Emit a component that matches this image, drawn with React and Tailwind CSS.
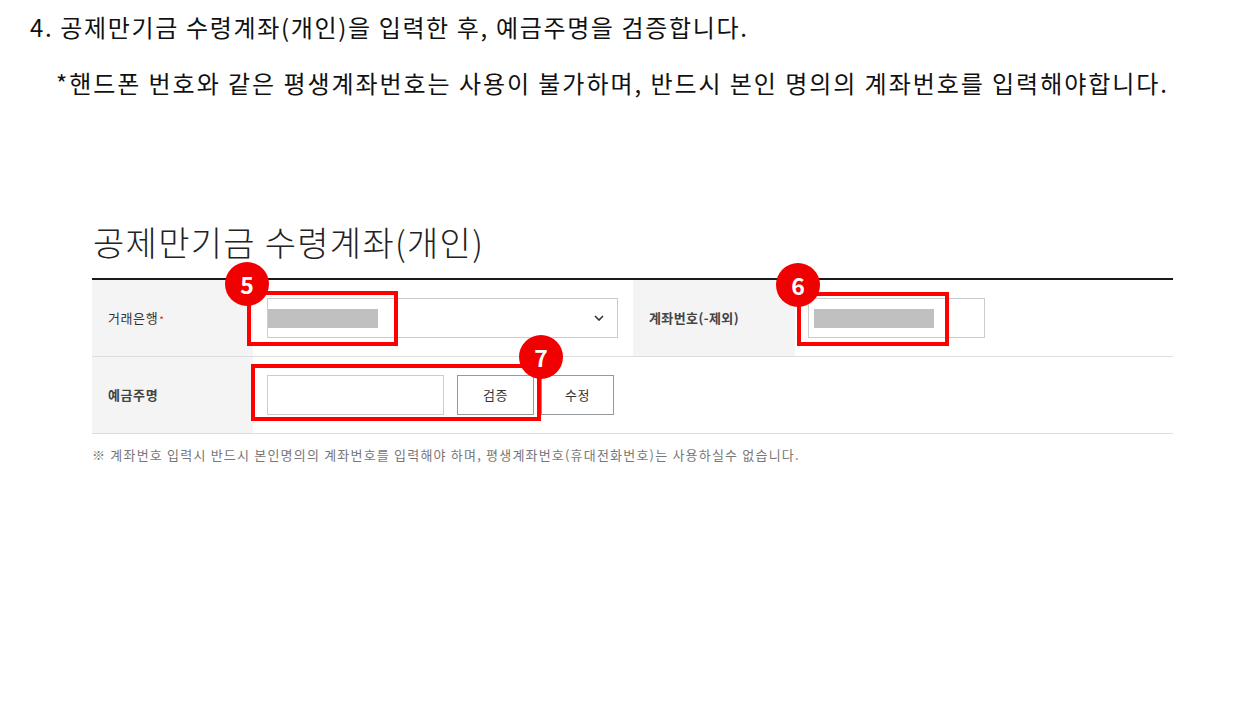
import React from "react";

const font = { fontFamily: '"Noto Sans CJK KR", "Noto Sans", sans-serif' };

// numbered red marker over the form
const Marker = ({ n, className }) => (
  <div
    className={`absolute w-[44px] h-[44px] rounded-full bg-[#f00000] text-white text-[23px] font-bold flex items-center justify-center leading-none ${className}`}
  >
    {n}
  </div>
);

const Redacted = ({ className }) => (
  <div className={`h-[19px] bg-[#c0c0c0] ${className}`} />
);

export default function App() {
  return (
    <div
      className="w-[1260px] h-[702px] bg-white overflow-hidden text-[#111]"
      style={font}
    >
      <p className="mt-[11px] ml-[30px] text-[24px] leading-[32px] tracking-[1.65px]">
        4. 공제만기금 수령계좌(개인)을 입력한 후, 예금주명을 검증합니다.
      </p>
      <p className="mt-[24px] ml-[56px] text-[24px] leading-[32px] tracking-[1.95px]">
        *핸드폰 번호와 같은 평생계좌번호는 사용이 불가하며, 반드시 본인 명의의
        계좌번호를 입력해야합니다.
      </p>

      <div className="ml-[92px] w-[1081px]">
        <h2 className="mt-[122px] pl-[1px] text-[34px] leading-[42px] font-light text-[#222] tracking-[1.3px]">
          공제만기금 수령계좌(개인)
        </h2>

        <div className="relative mt-[15px] border-t-2 border-[#1a1a1a]">
          {/* row 1 */}
          <div className="grid grid-cols-[161px_380px_162px_1fr] h-[77px] border-b border-[#dddddd]">
            <div className="bg-[#f4f4f4] flex items-center pl-[16px] text-[13px] text-[#333] tracking-[0.6px]">
              거래은행<span className="text-[#e23] text-[10px] ml-[1px] mt-[3px]">*</span>
            </div>
            <div className="flex items-center pl-[14px] pr-[15px]">
              <div className="flex-1 h-[40px] border border-[#cccccc] flex items-center justify-between pr-[13px]">
                <Redacted className="w-[110px]" />
                <svg width="10" height="6" viewBox="0 0 10 6">
                  <path
                    d="M1 1l4 4 4-4"
                    fill="none"
                    stroke="#333"
                    strokeWidth="1.6"
                  />
                </svg>
              </div>
            </div>
            <div className="bg-[#f4f4f4] flex items-center pl-[16px] text-[13px] font-bold text-[#444] tracking-[0.4px]">
              계좌번호(-제외)
            </div>
            <div className="flex items-center pl-[13px]">
              <div className="w-[177px] h-[40px] border border-[#cccccc] flex items-center pl-[5px]">
                <Redacted className="w-[120px]" />
              </div>
            </div>
          </div>

          {/* row 2 */}
          <div className="grid grid-cols-[161px_1fr] h-[77px] border-b border-[#dddddd]">
            <div className="bg-[#f4f4f4] flex items-center pl-[16px] text-[13px] font-bold text-[#444] tracking-[0.6px]">
              예금주명
            </div>
            <div className="flex items-center pl-[14px] gap-[13px]">
              <div className="w-[177px] h-[40px] border border-[#cccccc]" />
              <div className="flex gap-[7px]">
                <button className="w-[77px] h-[40px] border border-[#999999] text-[13px] text-[#333] bg-white tracking-[0.6px]">
                  검증
                </button>
                <button className="w-[73px] h-[40px] border border-[#999999] text-[13px] text-[#333] bg-white tracking-[0.6px]">
                  수정
                </button>
              </div>
            </div>
          </div>

          {/* annotation boxes */}
          <div className="absolute left-[155px] top-[11px] w-[151px] h-[55px] border-[4px] border-[#ff0000]" />
          <div className="absolute left-[705px] top-[12px] w-[152px] h-[54px] border-[4px] border-[#ff0000]" />
          <div className="absolute left-[159px] top-[84px] w-[290px] h-[57px] border-[4px] border-[#ff0000]" />
          <Marker n="5" className="left-[133px] top-[-18px]" />
          <Marker n="6" className="left-[684px] top-[-17px]" />
          <Marker n="7" className="left-[427px] top-[55px]" />
        </div>

        <p className="mt-[12px] text-[13px] leading-[18px] text-[#777] tracking-[1.2px]">
          ※ 계좌번호 입력시 반드시 본인명의의 계좌번호를 입력해야 하며,
          평생계좌번호(휴대전화번호)는 사용하실수 없습니다.
        </p>
      </div>
    </div>
  );
}
